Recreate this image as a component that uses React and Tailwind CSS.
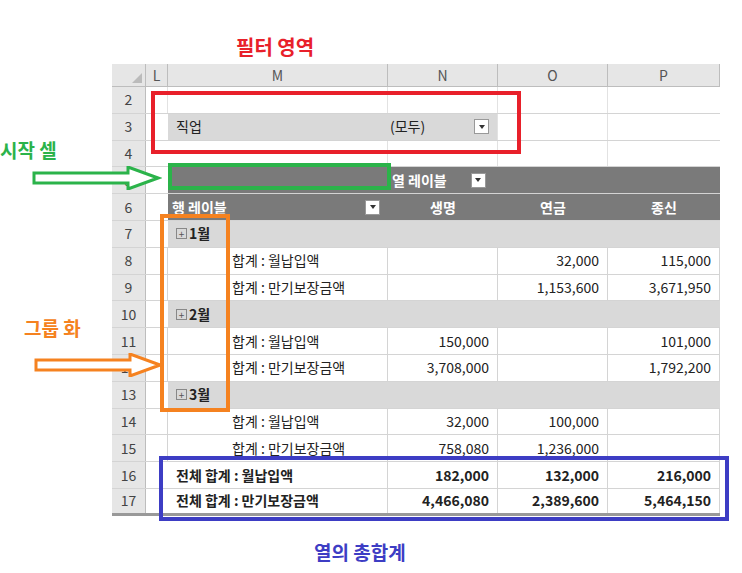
const F = { fontFamily: '"Noto Sans CJK KR","Noto Sans",sans-serif' };
const cols = "grid-cols-[34px_22px_220px_110px_110px_112px]";

function Row({ n, children, h = "h-[26.8px]" }) {
  return (
    <div className={`grid ${cols} ${h} border-b border-[#d4d4d4]`}>
      <div className="bg-[#e6e6e6] border-r border-[#bdbdbd] flex items-center justify-center text-[14px] text-[#444]">{n}</div>
      {children}
    </div>
  );
}
const Drop = ({ c = "" }) => (
  <span className={`w-[15px] h-[15px] bg-white border border-[#999] flex items-center justify-center ${c}`}>
    <span className="w-0 h-0 border-l-[3px] border-r-[3px] border-t-[4px] border-l-transparent border-r-transparent border-t-[#333]" />
  </span>
);
const C = ({ children, c = "" }) => <div className={`flex items-center px-2 text-[14px] ${c}`}>{children}</div>;

function DataRow({ n, label, v }) {
  return (
    <Row n={n}>
      <C c="border-r border-[#d4d4d4]" />
      <C c="pl-[64px] border-r border-[#d4d4d4]">{label}</C>
      {v.map((x, i) => <C key={i} c="justify-end border-r border-[#d4d4d4]">{x}</C>)}
    </Row>
  );
}
function GroupRow({ n, label }) {
  return (
    <Row n={n}>
      <C />
      <C c="col-span-4 bg-[#d9d9d9] font-bold gap-[2px] pl-[8px]">
        <span className="w-[11px] h-[11px] border border-[#888] text-[10px] leading-[9px] text-center text-[#555] font-normal">+</span>{label}
      </C>
    </Row>
  );
}
function TotalRow({ n, label, v, last }) {
  return (
    <Row n={n} h={last ? "h-[26.8px] border-b-[3px] border-b-[#999]" : "h-[26.8px]"}>
      <C />
      <C c="font-bold border-r border-[#d4d4d4]">{label}</C>
      {v.map((x, i) => <C key={i} c="justify-end font-bold border-r border-[#d4d4d4]">{x}</C>)}
    </Row>
  );
}

const Arrow = ({ color, x, y }) => (
  <svg className="absolute" style={{ left: x, top: y }} width="130" height="24" viewBox="0 0 130 24">
    <path d="M2 7 L96 7 L96 1 L126 12 L96 23 L96 17 L2 17 Z" fill="white" stroke={color} strokeWidth="3" />
  </svg>
);

export default function App() {
  return (
    <div className="relative w-[742px] h-[573px] bg-white text-[#222] overflow-hidden" style={F}>
      <div className="absolute left-[112px] top-[64px] w-[608px]">
        <div className={`grid ${cols} h-[23px] bg-[#e6e6e6] border-b border-[#bdbdbd] text-[14px] text-[#555]`}>
          <div className="border-r border-[#bdbdbd] flex items-end justify-end p-[3px]"><span className="w-0 h-0" style={{ borderBottom: "10px solid #bbb", borderLeft: "10px solid transparent" }} /></div>
          {["L", "M", "N", "O", "P"].map(c => <div key={c} className="border-r border-[#bdbdbd] flex items-center justify-center">{c}</div>)}
        </div>
        <Row n="2"><C c="border-r border-[#e2e2e2]" /><C c="border-r border-[#e2e2e2]" /><C c="border-r border-[#e2e2e2]" /><C c="border-r border-[#e2e2e2]" /><C /></Row>
        <Row n="3">
          <C />
          <C c="bg-[#d9d9d9]">직업</C>
          <C c="bg-[#d9d9d9] justify-between pl-[2px] border-r border-[#e2e2e2]">(모두)<Drop /></C>
          <C c="border-r border-[#e2e2e2]" /><C />
        </Row>
        <Row n="4"><C /><C c="border-r border-[#e2e2e2]" /><C c="border-r border-[#e2e2e2]" /><C c="border-r border-[#e2e2e2]" /><C /></Row>
        <Row n="5">
          <C />
          <C c="bg-[#7a7a7a]" />
          <C c="bg-[#7a7a7a] text-white font-bold pl-[4px] gap-[24px]">열 레이블<Drop /></C>
          <C c="bg-[#7a7a7a]" /><C c="bg-[#7a7a7a]" />
        </Row>
        <Row n="6">
          <C />
          <C c="bg-[#7a7a7a] text-white font-bold justify-between pl-[4px]">행 레이블<Drop /></C>
          <C c="bg-[#7a7a7a] text-white font-bold justify-center">생명</C>
          <C c="bg-[#7a7a7a] text-white font-bold justify-center">연금</C>
          <C c="bg-[#7a7a7a] text-white font-bold justify-center">종신</C>
        </Row>
        <GroupRow n="7" label="1월" />
        <DataRow n="8" label="합계 : 월납입액" v={["", "32,000", "115,000"]} />
        <DataRow n="9" label="합계 : 만기보장금액" v={["", "1,153,600", "3,671,950"]} />
        <GroupRow n="10" label="2월" />
        <DataRow n="11" label="합계 : 월납입액" v={["150,000", "", "101,000"]} />
        <DataRow n="12" label="합계 : 만기보장금액" v={["3,708,000", "", "1,792,200"]} />
        <GroupRow n="13" label="3월" />
        <DataRow n="14" label="합계 : 월납입액" v={["32,000", "100,000", ""]} />
        <DataRow n="15" label="합계 : 만기보장금액" v={["758,080", "1,236,000", ""]} />
        <TotalRow n="16" label="전체 합계 : 월납입액" v={["182,000", "132,000", "216,000"]} />
        <TotalRow n="17" label="전체 합계 : 만기보장금액" v={["4,466,080", "2,389,600", "5,464,150"]} last />
      </div>

      <div className="absolute left-[236px] top-[32px] text-[20px] font-bold text-[#e8202a]">필터 영역</div>
      <div className="absolute left-[151px] top-[91px] w-[370px] h-[63px] border-[4px] border-[#e8202a]" />
      <div className="absolute left-[0px] top-[136px] text-[19px] font-bold text-[#2bb34a]">시작 셀</div>
      <div className="absolute left-[168px] top-[163px] w-[223px] h-[27px] border-[4px] border-[#2bb34a]" />
      <Arrow color="#2bb34a" x={32} y={166} />
      <div className="absolute left-[24px] top-[314px] text-[19px] font-bold text-[#f58220]">그룹 화</div>
      <div className="absolute left-[160px] top-[214px] w-[70px] h-[198px] border-[4px] border-[#f58220]" />
      <Arrow color="#f58220" x={34} y={353} />
      <div className="absolute left-[159px] top-[456px] w-[570px] h-[65px] border-[4px] border-[#3d3dc4]" />
      <div className="absolute left-[314px] top-[538px] text-[19px] font-bold text-[#3d3dc4]">열의 총합계</div>
    </div>
  );
}
